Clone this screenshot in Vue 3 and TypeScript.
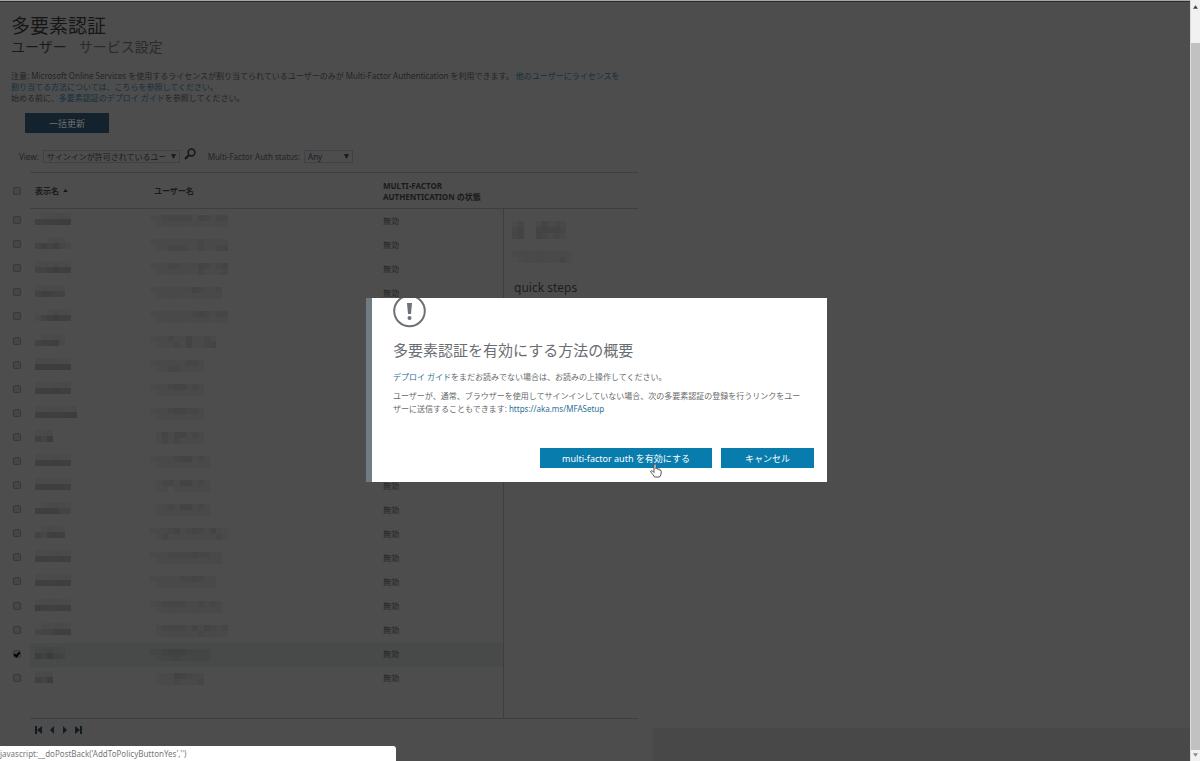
<script setup lang="ts">
import { ref } from 'vue'

interface User {
  name: string
  account: string
  checked: boolean
}

// Each digit is the strength of one 6px block; "/" separates the two block rows.
const users = ref<User[]>([
  { name: '011222/667788', account: '1233333143233/0122221221222', checked: false },
  { name: '001210/564732', account: '1222222232222/0123332131234', checked: false },
  { name: '111211/556867', account: '1223322243234/0122221131123', checked: false },
  { name: '12121/57655', account: '122222243223/012221122222', checked: false },
  { name: '001211/246866', account: '1222222343233/0122221222122', checked: false },
  { name: '01121/56672', account: '12232242232/01223142134', checked: false },
  { name: '222211/888888', account: '122222332/012332122', checked: false },
  { name: '111222/777877', account: '122344232/012221122', checked: false },
  { name: '1112112/7777788', account: '122344332/012222122', checked: false },
  { name: '112/648', account: '024244232/013231222', checked: false },
  { name: '111211/777877', account: '1222344232/0122121122', checked: false },
  { name: '111111/777776', account: '0133244232/0120121222', checked: false },
  { name: '012221/777744', account: '0123244232/0122221222', checked: false },
  { name: '01211/53676', account: '2223423432421/0131211122231', checked: false },
  { name: '111211/776676', account: '222333343322/012222211222', checked: false },
  { name: '111112/776777', account: '22222334322/01222221222', checked: false },
  { name: '112211/866677', account: '123333223232/012221122122', checked: false },
  { name: '011221/344677', account: '0233332424323/0122222132212', checked: false },
  { name: '11311/64743', account: '2234443222/0122321222', checked: true },
  { name: '112/648', account: '012254322/012132123', checked: false },
])

const heading = '130024232/350045443/350043232'
const subheading = '1221221221/0122222231'

const allChecked = ref(false)
const view = ref('allowed')
const status = ref('any')

interface Block {
  x: number
  y: number
  alpha: number
}

function blocks(pattern: string): Block[] {
  return pattern
    .split('/')
    .flatMap((row, y) => [...row].map((c, x) => ({ x: x * 6, y: y * 6, alpha: Number(c) * 0.026 })))
}
</script>

<template>
  <div class="window">
    <main class="page">
      <div class="content">
        <h1>多要素認証</h1>
        <nav class="tabs">
          <a href="#" class="current">ユーザー</a>
          <a href="#">サービス設定</a>
        </nav>

        <p class="notes">
          注意: Microsoft Online Services を使用するライセンスが割り当てられているユーザーのみが Multi-Factor Authentication を利用できます。
          <a href="#">他のユーザーにライセンスを<br />割り当てる方法については、こちらを参照してください。</a><br />
          始める前に、<a href="#">多要素認証のデプロイ ガイド</a>を参照してください。
        </p>

        <button type="button" class="bulk">一括更新</button>

        <form class="filters" @submit.prevent>
          <label for="view">View:</label>
          <span class="select wide">
            <select id="view" v-model="view">
              <option value="allowed">サインインが許可されているユーザー</option>
            </select>
            <svg viewBox="0 0 6 6"><path d="M0 0h6L3 6z" /></svg>
          </span>
          <button type="submit" class="search" aria-label="検索">
            <svg viewBox="0 0 12 12">
              <circle cx="7.5" cy="4.5" r="3.4" />
              <path d="M5 7 1 11" />
            </svg>
          </button>
          <label for="status">Multi-Factor Auth status:</label>
          <span class="select">
            <select id="status" v-model="status">
              <option value="any">Any</option>
            </select>
            <svg viewBox="0 0 6 6"><path d="M0 0h6L3 6z" /></svg>
          </span>
        </form>

        <div class="listing">
          <table>
            <thead>
              <tr>
                <th class="pick"><input v-model="allChecked" type="checkbox" aria-label="すべて選択" /></th>
                <th class="name">表示名 <svg class="sort" viewBox="0 0 6 4"><path d="M0 4 3 0l3 4z" /></svg></th>
                <th class="account">ユーザー名</th>
                <th>MULTI-FACTOR<br />AUTHENTICATION の状態</th>
              </tr>
            </thead>
            <tbody>
              <tr v-for="(user, i) in users" :key="i" :class="{ selected: user.checked }">
                <td class="pick"><input v-model="user.checked" type="checkbox" aria-label="ユーザーを選択" /></td>
                <td class="name">
                  <svg class="mosaic" viewBox="0 0 90 12">
                    <rect v-for="(b, n) in blocks(user.name)" :key="n" :x="b.x" :y="b.y" width="6" height="6" :fill-opacity="b.alpha" />
                  </svg>
                </td>
                <td class="account">
                  <svg class="mosaic" viewBox="0 0 90 12">
                    <rect v-for="(b, n) in blocks(user.account)" :key="n" :x="b.x" :y="b.y" width="6" height="6" :fill-opacity="b.alpha" />
                  </svg>
                </td>
                <td>無効</td>
              </tr>
            </tbody>
          </table>
          <aside>
            <div class="aside-head"></div>
            <div class="details">
              <svg class="person" viewBox="0 0 60 18">
                <rect v-for="(b, n) in blocks(heading)" :key="n" :x="b.x" :y="b.y" width="6" height="6" :fill-opacity="b.alpha" />
              </svg>
              <svg class="mail" viewBox="0 0 60 12">
                <rect v-for="(b, n) in blocks(subheading)" :key="n" :x="b.x" :y="b.y" width="6" height="6" :fill-opacity="b.alpha" />
              </svg>
              <h2>quick steps</h2>
            </div>
          </aside>
        </div>
      </div>

      <div class="bottom">
        <nav class="pager">
          <button type="button" aria-label="最初"><svg viewBox="0 0 8 8"><path d="M0 0h2v8H0zM7 0v8L2 4z" /></svg></button>
          <button type="button" aria-label="前へ"><svg viewBox="0 0 8 8"><path d="M6 0v8L2 4z" /></svg></button>
          <button type="button" aria-label="次へ"><svg viewBox="0 0 8 8"><path d="M2 0v8l4-4z" /></svg></button>
          <button type="button" aria-label="最後"><svg viewBox="0 0 8 8"><path d="M6 0h2v8H6zM1 0v8l5-4z" /></svg></button>
        </nav>
        <footer></footer>
      </div>
    </main>

    <div class="scrollbar">
      <svg viewBox="0 0 6 4"><path d="M0 4 3 0l3 4z" /></svg>
      <span class="thumb"></span>
      <svg viewBox="0 0 6 4"><path d="M0 0h6L3 4z" class="down" /></svg>
    </div>

    <div class="overlay">
      <section class="dialog" role="dialog" aria-labelledby="dialog-title">
        <svg class="alert" viewBox="0 0 34 30">
          <circle cx="16.5" cy="13" r="15.3" />
          <path d="M14 5h5l-1 11h-3z" />
          <circle cx="16.5" cy="20" r="2" class="dot" />
        </svg>
        <h2 id="dialog-title">多要素認証を有効にする方法の概要</h2>
        <p><a href="#">デプロイ ガイド</a>をまだお読みでない場合は、お読みの上操作してください。</p>
        <p>
          ユーザーが、通常、ブラウザーを使用してサインインしていない場合、次の多要素認証の登録を行うリンクをユー<br />ザーに送信することもできます:
          <a href="#">https://aka.ms/MFASetup</a>
        </p>
        <div class="actions">
          <button type="button" class="enable">
            multi-factor auth を有効にする
            <svg class="pointer" viewBox="0 0 12 15">
              <path d="M4 9V2q0-1 1-1t1 1v4q0-.8 1-.8t1 .8v.6q.2-.7 1-.7t.9.8v.7q1.3-.5 1.3.7V10q0 2-1.7 4H4.5Q3.5 12 1 9.3.3 8 1.2 7.7 2.5 7.5 4 9.5z" />
            </svg>
          </button>
          <button type="button" class="cancel">キャンセル</button>
        </div>
      </section>
    </div>

    <div class="status-bar">javascript:__doPostBack('AddToPolicyButtonYes','')</div>
  </div>
</template>

<style>
body {
  margin: 0;
  background: #4d4d4d;
}
</style>

<style scoped>
.window {
  position: relative;
  display: flex;
  min-height: 100vh;
  overflow: hidden;
  box-sizing: border-box;
  font: 8px/11px "Noto Sans", "Noto Sans CJK JP", sans-serif;
  color: #242424;
  background: #4d4d4d;
}
a {
  color: #152e3d;
  text-decoration: none;
}
button {
  font: inherit;
  border: 0;
  padding: 0;
  background: none;
}
svg {
  display: block;
}
.page {
  flex: 1;
  display: flex;
  flex-direction: column;
  border-top: 1px solid #a4a9a6;
  box-shadow: inset 0 1px #2b2d2c;
}
.content {
  width: 627px;
  padding: 13px 0 0 11px;
}
h1 {
  margin: 0;
  font-size: 19px;
  line-height: 24px;
  font-weight: 400;
  color: #161616;
}
.tabs {
  display: flex;
  gap: 12px;
  font-size: 14px;
  line-height: 18px;
}
.tabs a {
  color: #2b2b2b;
}
.tabs .current {
  color: #1a1a1a;
}
.notes {
  margin: 14px 0 10px;
  white-space: nowrap;
}
.bulk {
  display: block;
  width: 84px;
  height: 20px;
  margin-left: 14px;
  font-size: 9px;
  color: #6d7173;
  background: #13222d;
}
.filters {
  display: flex;
  align-items: center;
  height: 14px;
  margin: 16px 0 0 8px;
}
.select {
  position: relative;
  width: 49px;
  margin-left: 4px;
}
.select.wide {
  width: 137px;
}
select {
  display: block;
  width: 100%;
  height: 13px;
  padding: 0 14px 0 3px;
  border: 1px solid #3a434b;
  border-radius: 0;
  appearance: none;
  font: inherit;
  color: #1c1c1c;
  background: transparent;
}
.select svg {
  position: absolute;
  right: 4px;
  top: 4px;
  width: 5px;
  height: 5px;
  fill: #1a1a1a;
  pointer-events: none;
}
.search {
  width: 12px;
  margin: 0 12px 4px 4px;
}
.search svg {
  width: 12px;
  height: 12px;
  fill: none;
  stroke: #161616;
  stroke-width: 1.5;
}
.search path {
  stroke-width: 2;
}
.listing {
  display: flex;
  margin-top: 9px;
}
table {
  width: 492px;
  height: 519px;
  margin-bottom: 27px;
  border-collapse: separate;
  border-spacing: 0;
  table-layout: fixed;
}
th,
td {
  padding: 0;
  text-align: left;
  vertical-align: middle;
}
td {
  padding-bottom: 2px;
}
th {
  height: 35px;
  border-top: 1px solid #3e3e3e;
  border-bottom: 1px solid #3e3e3e;
  font-weight: 700;
  color: #1a1a1a;
}
th.pick {
  border-color: transparent;
}
.pick {
  width: 19px;
}
th.name,
td.name {
  width: 115px;
  padding-left: 5px;
}
th.account {
  width: 229px;
  padding-left: 4px;
}
.selected td:not(.pick) {
  background: #474a48;
}
.sort {
  display: inline-block;
  width: 5px;
  height: 3px;
  margin: 0 0 2px 2px;
  fill: #161616;
}
.mosaic {
  width: 90px;
  height: 12px;
}
.name .mosaic {
  margin-bottom: 2px;
}
.account .mosaic {
  margin-top: 2px;
}
input[type="checkbox"] {
  display: block;
  width: 8px;
  height: 8px;
  margin: 0 0 0 2px;
  box-sizing: border-box;
  appearance: none;
  border: 1px solid #383838;
  border-radius: 2px;
  background: #464646;
}
input[type="checkbox"]:checked::after {
  content: "";
  display: block;
  width: 2px;
  height: 4px;
  margin-left: 1px;
  border: solid #000;
  border-width: 0 2px 2px 0;
  transform: rotate(40deg);
}
aside {
  flex: 1;
  display: flex;
  flex-direction: column;
}
.aside-head {
  height: 35px;
  border-top: 1px solid #3e3e3e;
  border-bottom: 1px solid #3e3e3e;
}
.details {
  flex: 1;
  padding: 12px 0 0 8px;
  border-left: 1px solid #3e3e3e;
}
.person {
  width: 60px;
  height: 18px;
}
.mail {
  width: 60px;
  height: 12px;
  margin-top: 12px;
}
.details h2 {
  margin: 16px 0 0 2px;
  font-size: 12px;
  line-height: 18px;
  font-weight: 400;
  color: #1d1d1d;
}
.bottom {
  flex: 1;
  display: flex;
}
.pager {
  display: flex;
  align-items: flex-start;
  gap: 5px;
  width: 603px;
  height: 8px;
  margin: 0 15px 0 30px;
  padding: 7px 0 0 5px;
  border-top: 1px solid #3e3e3e;
}
.pager svg {
  width: 8px;
  height: 8px;
  fill: #101c23;
}
.bottom footer {
  flex: 1;
  margin-top: 10px;
  background: #484848;
}
.scrollbar {
  display: flex;
  flex-direction: column;
  align-items: center;
  width: 10px;
  padding: 5px 0 4px;
  box-sizing: border-box;
  border-left: 1px solid #dcdcdc;
  background: #f1f1f1;
}
.scrollbar svg {
  width: 5px;
  height: 4px;
  fill: #444;
}
.scrollbar .down {
  fill: #888;
}
.thumb {
  flex: 1;
  width: 100%;
  margin: 34px 0 3px;
  background: #c1c1c1;
}
.overlay {
  position: absolute;
  inset: 19px 7px 0 0;
  display: flex;
  align-items: center;
  justify-content: center;
}
.dialog {
  width: 434px;
  box-sizing: content-box;
  padding: 0 0 14px 21px;
  border-left: 6px solid #717b82;
  color: #66696d;
  background: #fff;
  line-height: 13px;
}
.dialog a {
  color: #2b7192;
}
.alert {
  width: 34px;
  height: 30px;
  fill: none;
  stroke: #6b7176;
  stroke-width: 2;
}
.alert path,
.alert .dot {
  fill: #6b7176;
  stroke: none;
}
.dialog h2 {
  margin: 12px 0 10px;
  font-size: 15px;
  line-height: 20px;
  font-weight: 400;
  color: #6a6e73;
}
.dialog p {
  margin: 0 0 6px;
  white-space: nowrap;
}
.actions {
  display: flex;
  justify-content: flex-end;
  gap: 9px;
  margin: 33px 13px 0 0;
}
.actions button {
  height: 20px;
  font-size: 9px;
  color: #fff;
  background: #087cad;
}
.actions .enable {
  position: relative;
  width: 172px;
}
.actions .cancel {
  width: 93px;
}
.pointer {
  position: absolute;
  left: 110px;
  top: 15px;
  width: 12px;
  height: 15px;
  fill: #fff;
  stroke: #555;
  stroke-width: 1;
}
.status-bar {
  position: absolute;
  left: 0;
  bottom: 0;
  width: 396px;
  height: 15px;
  line-height: 15px;
  color: #777;
  background: #fff;
  border-top-right-radius: 3px;
}
</style>
